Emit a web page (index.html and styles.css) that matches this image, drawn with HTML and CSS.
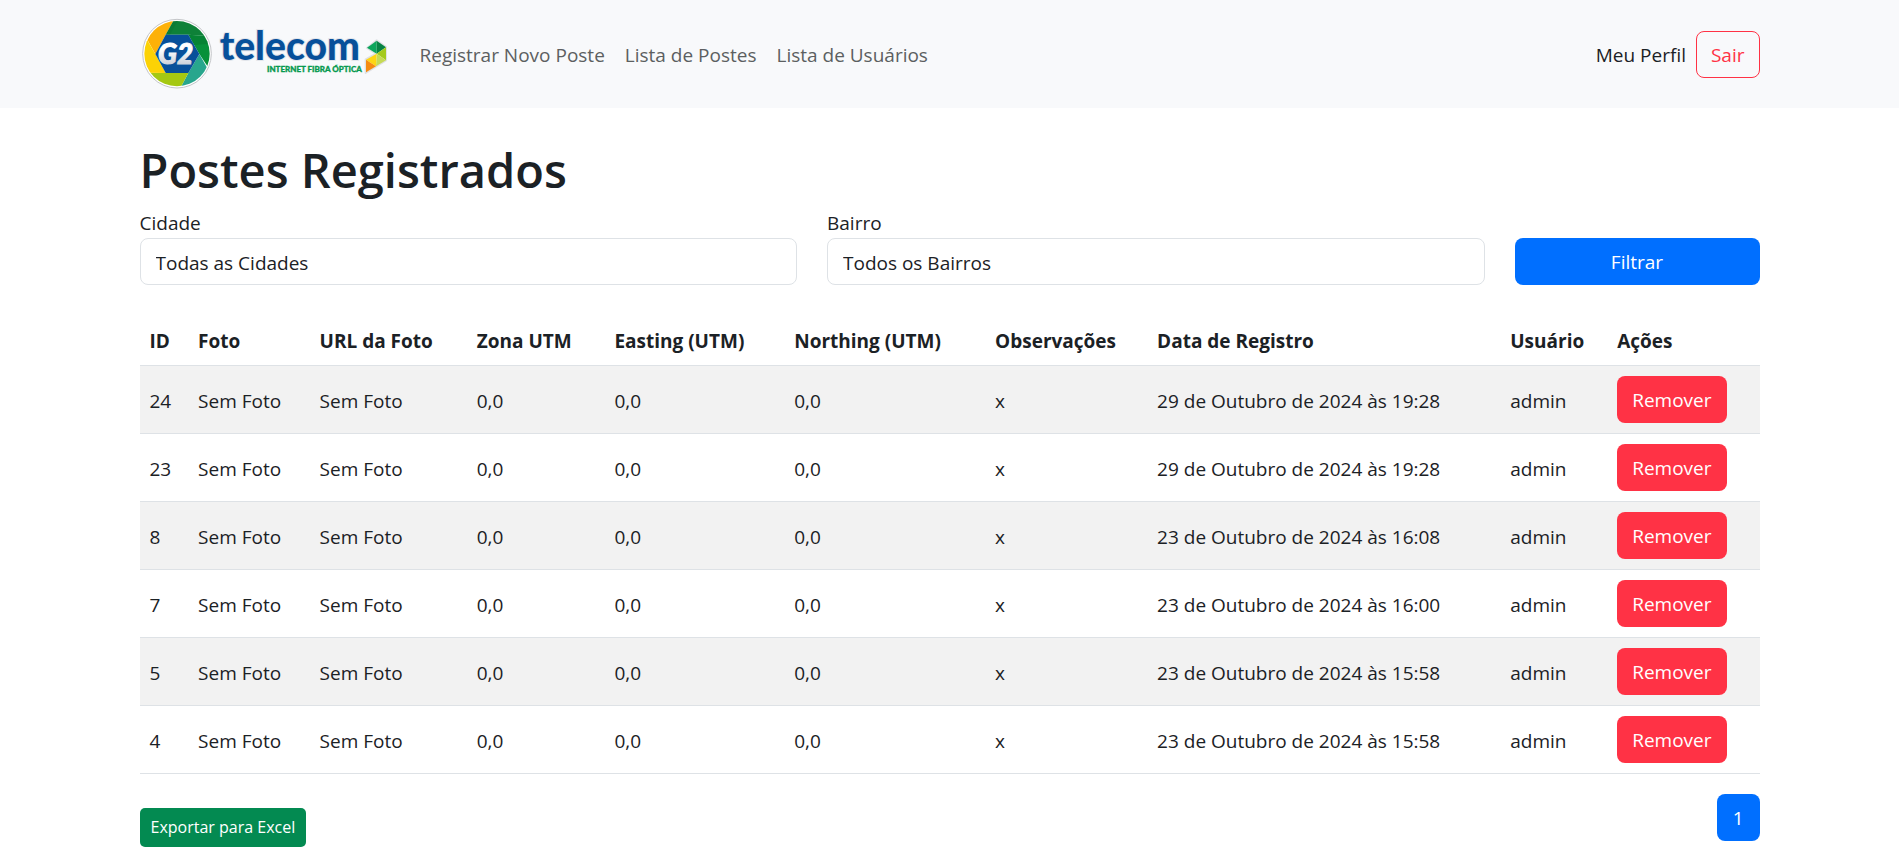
FILE: index.html
```html
<!DOCTYPE html>
<html lang="pt-BR">
<head>
  <meta charset="utf-8">
  <meta name="viewport" content="width=device-width, initial-scale=1">
  <title>Postes Registrados</title>
  <link rel="stylesheet" href="styles.css">
</head>
<body>
  <header class="navbar">
    <div class="container navbar-inner">
      <a class="brand" href="#" aria-label="G2 Telecom">
        <svg class="logo" viewBox="30 45 744 234" role="img" aria-hidden="true">
          <defs>
            <clipPath id="disc"><circle cx="141" cy="161" r="98"/></clipPath>
            <linearGradient id="silver" x1="0" y1="0" x2="0" y2="1">
              <stop offset="0.4" stop-color="#ffffff"/>
              <stop offset="1" stop-color="#b9c0cc"/>
            </linearGradient>
          </defs>
          <circle cx="141" cy="161" r="103" fill="#fff" stroke="#c3c5c8" stroke-width="3"/>
          <g clip-path="url(#disc)">
            <path d="M76 162 107 104 140 45H30V80Z" fill="#fdb108"/>
            <path d="M107 104 140 45H260V110L175 104Z" fill="#0e8138"/>
            <path d="M175 104 260 110V240L208 162Z" fill="#07913a"/>
            <path d="M208 162 250 237V279H143L175 219Z" fill="#28a68d"/>
            <path d="M175 219 143 279H30V218L107 219Z" fill="#a5c812"/>
            <path d="M107 219 30 218V82L76 162Z" fill="#fcd205"/>
            <path d="M175 104 260 110V130L192 135Z" fill="#066d2c" opacity=".4"/>
            <path d="M107 104 140 45 144 60 120 104Z" fill="#066d2c" opacity=".3"/>
          </g>
          <path d="M76 162 107 104H175L208 162 175 219H107Z" fill="#07509a"/>
          <text class="logo-mark" x="84" y="192">G2</text>
          <text class="logo-name" x="269" y="181">telecom</text>
          <text class="logo-tagline" x="411" y="216">INTERNET FIBRA ÓPTICA</text>
          <path d="M740 121 768 141V181L707 219V178L738 161 711 144Z" fill="#fff" stroke="#dfe1e4" stroke-width="6" stroke-linejoin="round"/>
          <path d="M711 143 740 122V161Z" fill="#0ba65b"/>
          <path d="M740 122 768 142 740 161Z" fill="#078344"/>
          <path d="M768 142V181L740 161Z" fill="#a4ca1c"/>
          <path d="M740 161 768 181 738 199Z" fill="#c6da55"/>
          <path d="M740 161 738 199 708 179Z" fill="#fdd614"/>
          <path d="M708 179 738 199 708 217Z" fill="#f58b12"/>
        </svg>
      </a>
      <nav class="nav-links">
        <a class="nav-link" href="#">Registrar Novo Poste</a>
        <a class="nav-link" href="#">Lista de Postes</a>
        <a class="nav-link" href="#">Lista de Usuários</a>
      </nav>
      <div class="account">
        <a class="profile-link" href="#">Meu Perfil</a>
        <button class="btn btn-outline-danger" type="button">Sair</button>
      </div>
    </div>
  </header>

  <main class="container">
    <h1 class="page-title">Postes Registrados</h1>
    <form class="filters">
      <div class="field">
        <label for="cidade">Cidade</label>
        <select class="form-control" id="cidade"><option>Todas as Cidades</option></select>
      </div>
      <div class="field">
        <label for="bairro">Bairro</label>
        <select class="form-control" id="bairro"><option>Todos os Bairros</option></select>
      </div>
      <button class="btn btn-primary filter-submit" type="button">Filtrar</button>
    </form>

    <table class="table">
      <colgroup>
        <col class="col-id"><col class="col-photo"><col class="col-url"><col class="col-zone"><col class="col-easting">
        <col class="col-northing"><col class="col-notes"><col class="col-date"><col class="col-user"><col>
      </colgroup>
      <thead>
        <tr><th>ID</th><th>Foto</th><th>URL da Foto</th><th>Zona UTM</th><th>Easting (UTM)</th><th>Northing (UTM)</th><th>Observações</th><th>Data de Registro</th><th>Usuário</th><th>Ações</th></tr>
      </thead>
      <tbody>
        <tr><td>24</td><td>Sem Foto</td><td>Sem Foto</td><td>0,0</td><td>0,0</td><td>0,0</td><td>x</td><td>29 de Outubro de 2024 às 19:28</td><td>admin</td><td class="actions"><button class="btn btn-danger" type="button">Remover</button></td></tr>
        <tr><td>23</td><td>Sem Foto</td><td>Sem Foto</td><td>0,0</td><td>0,0</td><td>0,0</td><td>x</td><td>29 de Outubro de 2024 às 19:28</td><td>admin</td><td class="actions"><button class="btn btn-danger" type="button">Remover</button></td></tr>
        <tr><td>8</td><td>Sem Foto</td><td>Sem Foto</td><td>0,0</td><td>0,0</td><td>0,0</td><td>x</td><td>23 de Outubro de 2024 às 16:08</td><td>admin</td><td class="actions"><button class="btn btn-danger" type="button">Remover</button></td></tr>
        <tr><td>7</td><td>Sem Foto</td><td>Sem Foto</td><td>0,0</td><td>0,0</td><td>0,0</td><td>x</td><td>23 de Outubro de 2024 às 16:00</td><td>admin</td><td class="actions"><button class="btn btn-danger" type="button">Remover</button></td></tr>
        <tr><td>5</td><td>Sem Foto</td><td>Sem Foto</td><td>0,0</td><td>0,0</td><td>0,0</td><td>x</td><td>23 de Outubro de 2024 às 15:58</td><td>admin</td><td class="actions"><button class="btn btn-danger" type="button">Remover</button></td></tr>
        <tr><td>4</td><td>Sem Foto</td><td>Sem Foto</td><td>0,0</td><td>0,0</td><td>0,0</td><td>x</td><td>23 de Outubro de 2024 às 15:58</td><td>admin</td><td class="actions"><button class="btn btn-danger" type="button">Remover</button></td></tr>
      </tbody>
    </table>

    <div class="table-footer">
      <button class="btn btn-success btn-sm" type="button">Exportar para Excel</button>
      <nav class="pagination" aria-label="Paginação">
        <a class="page-link" href="#" aria-current="page">1</a>
      </nav>
    </div>
  </main>
</body>
</html>
```

FILE: styles.css
```css
* {
  box-sizing: border-box;
}

body {
  margin: 0;
  background: #fff;
  color: #1b2125;
  font-family: "Segoe UI", "Open Sans", "Noto Sans", sans-serif;
  font-size: 19px;
  line-height: 30px;
}

a {
  color: inherit;
  text-decoration: none;
}

.container {
  width: 100%;
  max-width: 1650px;
  margin: 0 auto;
  padding: 0 15px;
}

/* Navbar */
.navbar {
  padding: 10px 0;
  background: #f8f9fb;
}

.navbar-inner {
  display: flex;
  align-items: center;
  min-height: 88px;
}

.brand {
  display: flex;
  margin-right: 22px;
}

.logo {
  width: 248px;
  height: 78px;
}

.logo-mark {
  fill: url(#silver);
  stroke: url(#silver);
  stroke-width: 3px;
  font-family: Lato, sans-serif;
  font-size: 84px;
  font-style: italic;
  font-weight: 900;
}

.logo-name {
  fill: #07509a;
  stroke: #e2e5ea;
  stroke-width: 6px;
  paint-order: stroke;
  font-family: Lato, sans-serif;
  font-size: 117px;
  font-weight: 900;
}

.logo-tagline {
  fill: #07994f;
  stroke: #07994f;
  stroke-width: 1px;
  font-family: Lato, sans-serif;
  font-size: 24px;
  font-weight: 900;
}

.nav-links {
  display: flex;
}

.nav-link {
  padding: 11px 10px 9px;
  color: #5c5f61;
}

.account {
  display: flex;
  align-items: center;
  gap: 10px;
  margin-left: auto;
}

.profile-link {
  padding-top: 2px;
}

/* Buttons */
.btn {
  padding: 9px 14px 7px;
  border: 1px solid transparent;
  border-radius: 8px;
  color: #fff;
  font: inherit;
  line-height: 29px;
  text-align: center;
  cursor: pointer;
}

.btn-outline-danger {
  border-color: #ff3245;
  background: transparent;
  color: #ff3245;
}

.btn-danger {
  background: #ff3245;
}

.btn-primary {
  background: #006fff;
}

.btn-success {
  background: #038a51;
}

.btn-sm {
  padding: 5px 10px;
  border-radius: 5px;
  font-size: 16px;
  line-height: 27px;
}

/* Filters */
.page-title {
  margin: 32px 0 8px;
  font-size: 47px;
  font-weight: 600;
  line-height: 60px;
}

.filters {
  display: grid;
  grid-template-columns: repeat(12, 1fr);
  column-gap: 30px;
  align-items: end;
  margin-bottom: 30px;
}

.field {
  display: flex;
  flex-direction: column;
  grid-column: span 5;
}

.filter-submit {
  grid-column: span 2;
}

.form-control {
  width: 100%;
  height: 47px;
  padding: 2px 15px 0;
  border: 1px solid #dee2e6;
  border-radius: 8px;
  appearance: none;
  background: #fff;
  color: inherit;
  font: inherit;
}

/* Table */
.table {
  width: 100%;
  margin-bottom: 20px;
  border-spacing: 0;
  table-layout: fixed;
}

.table th,
.table td {
  padding: 11px 10px 9px;
  border-bottom: 1px solid #dee2e6;
  text-align: left;
  vertical-align: middle;
  white-space: nowrap;
}

.table th {
  font-weight: 700;
}

.table .actions {
  padding: 10px;
}

.actions .btn {
  display: block;
}

.table tbody tr:nth-child(odd) {
  background: #f2f2f2;
}

.col-id { width: 3%; }
.col-photo { width: 7.5%; }
.col-url { width: 9.7%; }
.col-zone { width: 8.5%; }
.col-easting { width: 11.1%; }
.col-northing { width: 12.4%; }
.col-notes { width: 10%; }
.col-date { width: 21.8%; }
.col-user { width: 6.6%; }

/* Footer */
.table-footer {
  display: flex;
  align-items: center;
  justify-content: space-between;
}

.pagination {
  display: flex;
  margin-bottom: 20px;
}

.page-link {
  padding: 9px 16px 8px;
  border-radius: 8px;
  background: #006fff;
  color: #fff;
}
```
